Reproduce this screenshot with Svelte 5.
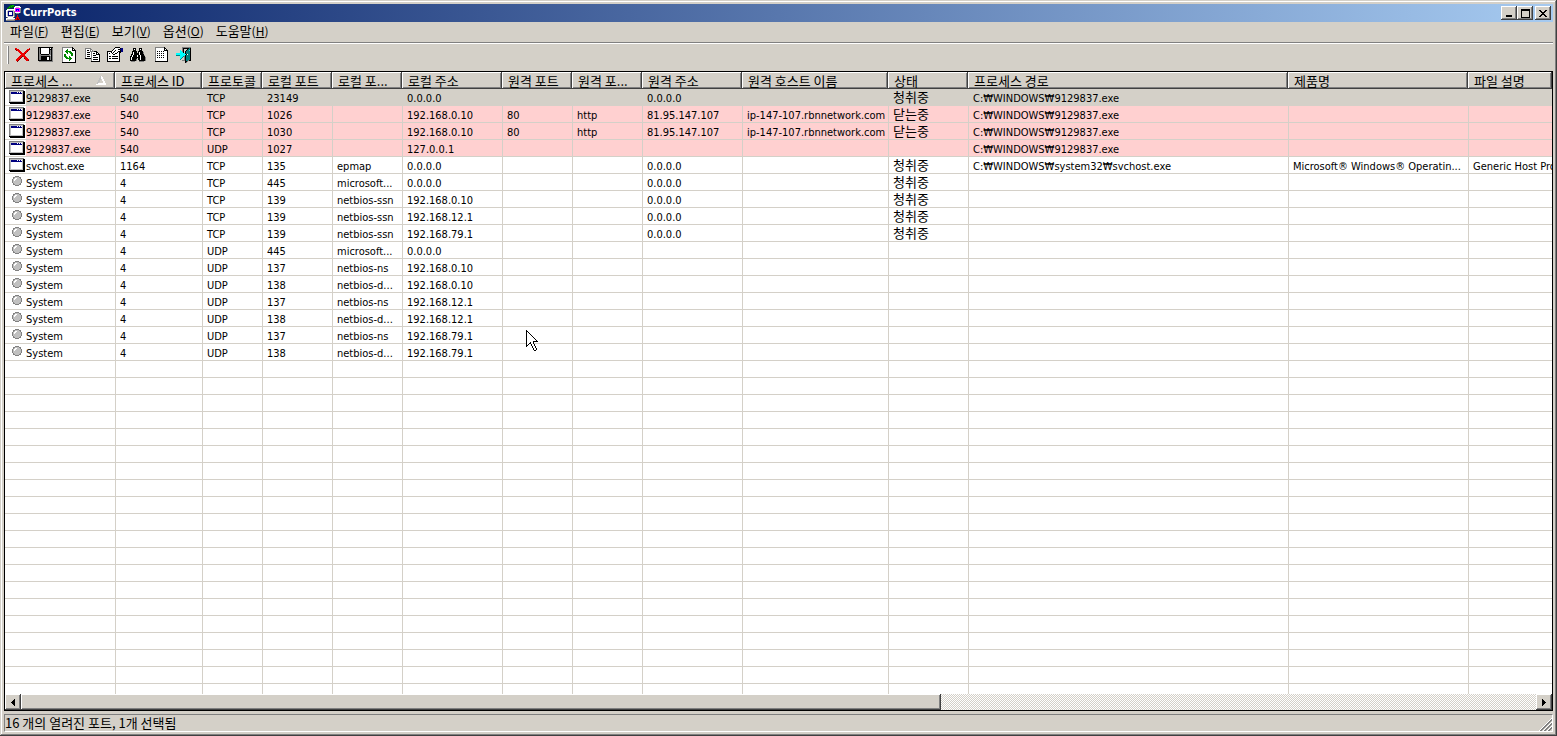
<script>
  const ROW_HEIGHT = 17;

  const menus = [
    ['파일', 'F'],
    ['편집', 'E'],
    ['보기', 'V'],
    ['옵션', 'O'],
    ['도움말', 'H'],
  ];

  const columns = [
    { text: '프로세스 ...', width: 110, sorted: true },
    { text: '프로세스 ID', width: 87 },
    { text: '프로토콜', width: 60 },
    { text: '로컬 포트', width: 70 },
    { text: '로컬 포...', width: 70 },
    { text: '로컬 주소', width: 100 },
    { text: '원격 포트', width: 70 },
    { text: '원격 포...', width: 70 },
    { text: '원격 주소', width: 100 },
    { text: '원격 호스트 이름', width: 146 },
    { text: '상태', width: 80 },
    { text: '프로세스 경로', width: 320 },
    { text: '제품명', width: 180 },
    { text: '파일 설명' },
  ];

  const exe = 'C:₩WINDOWS₩9129837.exe';
  const svchost = 'C:₩WINDOWS₩system32₩svchost.exe';
  const host = 'ip-147-107.rbnnetwork.com';

  const rows = [
    ['9129837.exe', '540', 'TCP', '23149', '', '0.0.0.0', '', '', '0.0.0.0', '', '청취중', exe, '', ''],
    ['9129837.exe', '540', 'TCP', '1026', '', '192.168.0.10', '80', 'http', '81.95.147.107', host, '닫는중', exe, '', ''],
    ['9129837.exe', '540', 'TCP', '1030', '', '192.168.0.10', '80', 'http', '81.95.147.107', host, '닫는중', exe, '', ''],
    ['9129837.exe', '540', 'UDP', '1027', '', '127.0.0.1', '', '', '', '', '', exe, '', ''],
    ['svchost.exe', '1164', 'TCP', '135', 'epmap', '0.0.0.0', '', '', '0.0.0.0', '', '청취중', svchost, 'Microsoft® Windows® Operatin...', 'Generic Host Process'],
    system('TCP', '445', 'microsoft...', '0.0.0.0', true),
    system('TCP', '139', 'netbios-ssn', '192.168.0.10', true),
    system('TCP', '139', 'netbios-ssn', '192.168.12.1', true),
    system('TCP', '139', 'netbios-ssn', '192.168.79.1', true),
    system('UDP', '445', 'microsoft...', '0.0.0.0'),
    system('UDP', '137', 'netbios-ns', '192.168.0.10'),
    system('UDP', '138', 'netbios-d...', '192.168.0.10'),
    system('UDP', '137', 'netbios-ns', '192.168.12.1'),
    system('UDP', '138', 'netbios-d...', '192.168.12.1'),
    system('UDP', '137', 'netbios-ns', '192.168.79.1'),
    system('UDP', '138', 'netbios-d...', '192.168.79.1'),
  ];

  function system(protocol, port, service, address, listening) {
    return [
      'System', '4', protocol, port, service, address, '', '',
      listening ? '0.0.0.0' : '', '', listening ? '청취중' : '', '', '', '',
    ];
  }

  // one letter per pixel
  const palette = {
    k: '#000000',
    w: '#ffffff',
    g: '#808080',
    s: '#c0c0c0',
    r: '#ee0000',
    d: '#800000',
    n: '#000080',
    b: '#0000ff',
    e: '#008000',
    l: '#00c000',
    c: '#00ffff',
    t: '#008080',
    y: '#ffffcc',
    m: '#ff00ff',
  };

  const art = {
    app: [
      '....eell........',
      '...eeleeewwwww..',
      '..eleee.wwsssww.',
      '.ee.....wmmmmmg.',
      '.wwwwwwwwmbbbmg.',
      'wwsssssswmbmbmg.',
      'wsnnnnnsgmmmmmg.',
      'wsnwwwnsgwwwwwg.',
      'wsnwwwnsg.ggg...',
      'wsnwwwnsg.......',
      'wsnnnnnsg..r....',
      'wwssssswg..r....',
      '.gwwwwwg..rrr...',
      'wwwwwwwww.rdr...',
      'wsssssssgrrddr..',
      'ggggggggg.......',
    ],
    remove: [
      '................',
      'rr............r.',
      'drrr........rrd.',
      '.drrr......rrr..',
      '...rrr....rrd...',
      '....rrr..rrr....',
      '.....rrrrrd.....',
      '......rrrr......',
      '.....rrrrr......',
      '....rrrdrrr.....',
      '...rrrd..rrr....',
      '..rrrd...drrr...',
      '.rrrd.....rrrr..',
      '.rrd.......rrd..',
      '..d.............',
      '................',
    ],
    save: [
      'kkkkkkkkkkkkkkk.',
      'kgkwwwwwwwwkwkg.',
      'kgkwwwwwwwwkkkg.',
      'kgkwwwwwwwwkgkg.',
      'kgkwwwwwwwwkgkg.',
      'kgkwwwwwwwwkgkg.',
      'kgkwwwwwwwwkgkg.',
      'kggkkkkkkkkggkg.',
      'kgggggggggggskg.',
      'kggkkkkkkkkkgkg.',
      'kggkkkkkkwwkgkg.',
      'kggkkkkkkwwkgkg.',
      'kggkkkkkkwwkgkg.',
      'kkkkkkkkkkkkkkg.',
      '.gggggggggggggg.',
      '................',
    ],
    refresh: [
      '.ggggggggggk....',
      '.gwwwwwwwwwkk...',
      '.gwwwwewwwwkwk..',
      '.gwwweewwwwkkkk.',
      '.gwweeleeewwwwk.',
      '.gwwweewleewwwk.',
      '.gwwwwewwleewwk.',
      '.gweewwwwweewwk.',
      '.gweewwwwweewwk.',
      '.gweelwwewwwwwk.',
      '.gwweelweewwwwk.',
      '.gwwweeeleewwwk.',
      '.gwwwwwweewwwwk.',
      '.gwwwwwwewwwwwk.',
      '.gwwwwwwwwwwwwk.',
      '.kkkkkkkkkkkkkk.',
    ],
    copy: [
      '................',
      '.gggggg.........',
      '.gwwwwgg........',
      '.gwkkwgwg.......',
      '.gwwwwggggkkk...',
      '.gwkkkwgwwwwkk..',
      '.gwwwwwgwkkwkwk.',
      '.gwkkkwgwwwwkkkk',
      '.gwwwwwgwkkkwwwk',
      '.gwkkkwgwwwwwwwk',
      '.gwwwwwgwkkkkkwk',
      '.kkkkkkgwwwwwwwk',
      '.......gwkkkkkwk',
      '.......gwwwwwwwk',
      '.......kkkkkkkkk',
      '................',
    ],
    properties: [
      '........kkkkk...',
      '.......kwwwwwknn',
      '......kwwwwkknnn',
      '.....kwwkwwwwknn',
      'kkkkkwwkwwwkkknn',
      'kwwwkwkwwwkwkk..',
      'kwkwwkwwkkwwk...',
      'kwwwwwkkwwwwk...',
      'kwwwwwwwwwwwk...',
      'kwkkwkkkkkkwk...',
      'kwwwwwwwwwwwk...',
      'kwkkwkkkkkkwk...',
      'kwwwwwwwwwwwk...',
      'kwwwwwwwwwwwk...',
      'kkkkkkkkkkkkk...',
      '................',
    ],
    find: [
      '................',
      '...kkk...kkk....',
      '...kwk...kwk....',
      '...kkk...kkk....',
      '..kkkkk.kkkkk...',
      '..kwkkk.kwkkkg..',
      '..kwkkkkkwkkkg..',
      '.kkwkkkkkwkkkk..',
      '.kwkkkkwkkwkkkg.',
      'kkwkkkkwkkwkkkk.',
      'kwkkkkkkkkwkkkkg',
      'kwkkkkk.kkwkkkkg',
      'kwkkkkg.kkwkkkkg',
      'kkkkkkg..kkkkkkg',
      '.gggg....ggggg..',
      '................',
    ],
    report: [
      '..gggggggggk....',
      '..gwwwwwwwwkk...',
      '..gwwwwwwwwkwk..',
      '..gwwwwwwwwkkkk.',
      '..gwkwkwkwkwwwk.',
      '..gwwwwwwwwwwwk.',
      '..gwkwkwkwkwwwk.',
      '..gwwwwwwwwwwwk.',
      '..gwkwkwkwkwwwk.',
      '..gwwwwwwwwwwwk.',
      '..gwkwkwkwkwwwk.',
      '..gwwwwwwwwwwwk.',
      '..gwwwwwwwwwwwk.',
      '..gwwwwwwwwwwwk.',
      '..kkkkkkkkkkkkk.',
      '................',
    ],
    exit: [
      '......ggggggggg.',
      '......gkkkkkktk.',
      '......gk...kttk.',
      '....c.gk..kttck.',
      '....ccgk.kttttk.',
      '....ccck.kttttk.',
      'ccccccccckttttk.',
      'cccccccccckwttk.',
      'ttttccccckttttk.',
      '....ccctgkttttk.',
      '....cct.gkttttk.',
      '....ct..gkttttk.',
      '....t...gkttttk.',
      '......gggkttgkk.',
      '.........kkg....',
      '.........kg.....',
    ],
    program: [
      'ggggggggggggggg.',
      'gssssssssssssskk',
      'gsnnnnnnwnwnwskk',
      'gsnnnnnnnnnnnskk',
      'gswwwwwwwwwwwskk',
      'gswwwwwwwwwwwskk',
      'gswwwwwwwwwwwskk',
      'gswwwwwwwwwwwskk',
      'gswwwwwwwwwwwskk',
      'gswwwwwwwwwwwskk',
      'gswwwwwwwwwwwskk',
      'gssssssssssssskk',
      'kkkkkkkkkkkkkkkk',
      '.kkkkkkkkkkkkkkk',
    ],
    service: [
      '................',
      '......gggg......',
      '....ggssssgg....',
      '....gswwsssg....',
      '...gswwsssssg...',
      '...gswssssssg...',
      '...gssssssssg...',
      '...gssssssssg...',
      '....gssssssg....',
      '....ggssssgg....',
      '......gggg......',
      '................',
      '................',
      '................',
    ],
    cursor: [
      'k...........',
      'kk..........',
      'kwk.........',
      'kwwk........',
      'kwwwk.......',
      'kwwwwk......',
      'kwwwwwk.....',
      'kwwwwwwk....',
      'kwwwwwwwk...',
      'kwwwwwwwwk..',
      'kwwwwwwwwwk.',
      'kwwwwwwkkkkk',
      'kwwwkwwk....',
      'kwwkkwwk....',
      'kwk..kwwk...',
      'kk...kwwk...',
      'k.....kwwk..',
      '......kwwk..',
      '.......kwwk.',
      '.......kwwk.',
      '........kk..',
    ],
    minimize: ['........', '........', '........', '........', '........', '........', '.kkkkkk.', '.kkkkkk.'],
    maximize: ['kkkkkkkkk', 'kkkkkkkkk', 'k.......k', 'k.......k', 'k.......k', 'k.......k', 'k.......k', 'k.......k', 'kkkkkkkkk'],
    close: ['kk....kk', '.kk..kk.', '..kkkk..', '...kk...', '..kkkk..', '.kk..kk.', 'kk....kk'],
    left: ['...k', '..kk', '.kkk', 'kkkk', '.kkk', '..kk', '...k'],
    right: ['k...', 'kk..', 'kkk.', 'kkkk', 'kkk.', 'kk..', 'k...'],
    sort: [
      '....sw....',
      '....sww...',
      '...ssww...',
      '...ss.ww..',
      '..ss..ww..',
      '..ss...ww.',
      '.ss....ww.',
      '.swwwwwwww',
      'wwwwwwwwww',
    ],
  };

  const tools = [
    ['remove', '연결 닫기'],
    ['save', '저장'],
    ['refresh', '새로 고침'],
    ['copy', '복사'],
    ['properties', '속성'],
    ['find', '찾기'],
    ['report', '보고서'],
    ['exit', '끝내기'],
  ];

  const toPaths = lines => {
    const paths = {};
    lines.forEach((line, y) => {
      [...line].forEach((key, x) => {
        if (key === '.') return;
        paths[key] = (paths[key] || '') + `M${x} ${y}h1v1h-1z`;
      });
    });
    return Object.entries(paths);
  };

  let selected = $state(0);
  let gridHeight = $state(0);

  let blankCount = $derived(
    Math.max(0, Math.ceil(gridHeight / ROW_HEIGHT) - rows.length - 1)
  );

  const isHangul = text => /[가-힣]/.test(text);
</script>

{#snippet icon(name)}
  <svg
    width={art[name][0].length}
    height={art[name].length}
    viewBox="0 0 {art[name][0].length} {art[name].length}"
    shape-rendering="crispEdges"
    aria-hidden="true"
  >
    {#each toPaths(art[name]) as [key, d]}
      <path {d} fill={palette[key]} />
    {/each}
  </svg>
{/snippet}

<main>
  <header class="title">
    {@render icon('app')}
    <h1>CurrPorts</h1>
    <div class="window-buttons">
      <button class="raised" aria-label="최소화">{@render icon('minimize')}</button>
      <button class="raised" aria-label="최대화">{@render icon('maximize')}</button>
      <button class="raised close" aria-label="닫기">{@render icon('close')}</button>
    </div>
  </header>

  <nav>
    {#each menus as [text, key]}
      <button>{text}<span>(<u>{key}</u>)</span></button>
    {/each}
  </nav>

  <div class="toolbar">
    <div class="grip"></div>
    {#each tools as [name, label]}
      <button aria-label={label}>{@render icon(name)}</button>
    {/each}
  </div>

  <div class="list">
    <div class="grid" bind:clientHeight={gridHeight}>
      <table>
        <colgroup>
          {#each columns as column}
            <col style:width={column.width ? `${column.width}px` : null} />
          {/each}
        </colgroup>
        <thead>
          <tr>
            {#each columns as column}
              <th>
                <button>
                  {column.text}
                  {#if column.sorted}{@render icon('sort')}{/if}
                </button>
              </th>
            {/each}
          </tr>
        </thead>
        <tbody>
          {#each rows as row, i}
            <tr
              class:alert={i > 0 && i < 4}
              class:selected={i === selected}
              onclick={() => (selected = i)}
            >
              {#each row as cell, j}
                {#if j === 0}
                  <td class="process">
                    <div>
                      <span>{@render icon(cell === 'System' ? 'service' : 'program')}</span>
                      <b>{cell}</b>
                    </div>
                  </td>
                {:else}
                  <td class:hangul={isHangul(cell)}>{cell}</td>
                {/if}
              {/each}
            </tr>
          {/each}
          {#each { length: blankCount } as _}
            <tr>
              {#each columns as _}<td></td>{/each}
            </tr>
          {/each}
        </tbody>
      </table>
      <div class="pointer">{@render icon('cursor')}</div>
    </div>
    <div class="scrollbar">
      <button class="raised" aria-label="왼쪽">{@render icon('left')}</button>
      <div class="track"><div class="thumb raised"></div></div>
      <button class="raised" aria-label="오른쪽">{@render icon('right')}</button>
    </div>
  </div>

  <footer>
    <span>16 개의 열려진 포트, 1개 선택됨</span>
    <svg width="13" height="13" viewBox="0 0 13 13" aria-hidden="true">
      <path d="M0 13L13 0M4 13L13 4M8 13L13 8" stroke="#fff" />
      <path d="M1 13L13 1M2 13L13 2M5 13L13 5M6 13L13 6M9 13L13 9M10 13L13 10" stroke="#808080" />
    </svg>
  </footer>
</main>

<style>
  :global(body) {
    margin: 0;
  }

  main {
    box-sizing: border-box;
    height: 100vh;
    padding: 4px;
    display: flex;
    flex-direction: column;
    overflow: hidden;
    background: #d4d0c8;
    box-shadow:
      inset -1px -1px #404040,
      inset 1px 1px #d4d0c8,
      inset -2px -2px #808080,
      inset 2px 2px #fff;
    color: #000;
    font-family: 'DejaVu Sans Condensed', 'Noto Sans CJK KR', sans-serif;
    font-size: 11px;
    cursor: default;
  }

  svg {
    display: block;
    flex: none;
  }

  button {
    display: flex;
    align-items: center;
    margin: 0;
    padding: 0;
    border: none;
    border-radius: 0;
    background: #d4d0c8;
    color: #000;
    font: inherit;
  }

  .raised {
    box-sizing: border-box;
    justify-content: center;
    background: #d4d0c8;
    box-shadow:
      inset -1px -1px #404040,
      inset 1px 1px #fff,
      inset -2px -2px #808080;
  }

  .title {
    flex: none;
    display: flex;
    align-items: center;
    height: 18px;
    padding: 0 2px;
    background: linear-gradient(to right, #0a246a, #a6caf0);
  }

  h1 {
    flex: 1;
    margin: 0 0 0 1px;
    color: #fff;
    font-size: 11px;
    line-height: 18px;
  }

  .window-buttons {
    display: flex;
  }

  .window-buttons button {
    width: 16px;
    height: 14px;
  }

  .window-buttons .close {
    margin-left: 2px;
  }

  nav {
    flex: none;
    display: flex;
    height: 18px;
    padding-bottom: 2px;
  }

  nav button {
    padding: 0 6px;
    font-family: 'Noto Sans CJK KR', sans-serif;
    font-size: 13px;
    line-height: 18px;
  }

  nav span {
    font-size: 12px;
  }

  .toolbar {
    flex: none;
    display: flex;
    align-items: center;
    height: 24px;
    padding-bottom: 4px;
    border-top: 1px solid #808080;
    box-shadow: inset 0 1px #fff;
  }

  .toolbar button {
    justify-content: center;
    width: 23px;
    height: 22px;
  }

  .grip {
    width: 1px;
    height: 18px;
    margin: 0 2px 0 3px;
    border-right: 1px solid #808080;
    background: #fff;
  }

  .list {
    flex: 1;
    min-height: 0;
    display: flex;
    flex-direction: column;
    border: 1px solid #000;
    background: #fff;
  }

  .grid {
    position: relative;
    flex: 1;
    min-height: 0;
    overflow: hidden;
  }

  table {
    width: 100%;
    table-layout: fixed;
    border-collapse: separate;
    border-spacing: 0;
  }

  th {
    height: 17px;
    padding: 0;
    font-weight: normal;
  }

  th button {
    box-sizing: border-box;
    justify-content: space-between;
    width: 100%;
    height: 17px;
    padding: 0 9px 0 6px;
    white-space: nowrap;
    font-family: 'Noto Sans CJK KR', sans-serif;
    font-size: 13px;
    line-height: 16px;
    box-shadow:
      inset -1px -1px #404040,
      inset 1px 1px #fff,
      inset -2px -2px #808080;
  }

  td {
    box-sizing: border-box;
    height: 17px;
    padding: 3px 0 0 4px;
    overflow: hidden;
    border-left: 1px solid #d4d0c8;
    border-bottom: 1px solid #d4d0c8;
    white-space: nowrap;
    line-height: 13px;
  }

  td:first-child {
    padding: 0;
    border-left: none;
  }

  td.hangul {
    padding-top: 0;
    overflow: visible;
    font-family: 'Noto Sans CJK KR', sans-serif;
    font-size: 13px;
    line-height: 16px;
  }

  .process div {
    display: flex;
    height: 16px;
  }

  .process span {
    width: 17px;
    padding: 1px 0 0 4px;
    background: #fff;
  }

  .process b {
    padding-top: 3px;
    font-weight: normal;
  }

  .alert td {
    background: #ffd0d0;
  }

  .selected td {
    background: #d4d0c8;
  }

  .pointer {
    position: absolute;
    left: 521px;
    top: 258px;
    pointer-events: none;
  }

  .scrollbar {
    flex: none;
    display: flex;
    height: 16px;
  }

  .scrollbar button {
    width: 16px;
  }

  .track {
    flex: 1;
    display: flex;
    background: repeating-conic-gradient(#fff 0 25%, #d4d0c8 0 50%) 0 0 / 2px 2px;
  }

  .thumb {
    width: 60.7%;
  }

  footer {
    flex: none;
    display: flex;
    align-items: flex-end;
    justify-content: space-between;
    box-sizing: border-box;
    height: 18px;
    margin-top: 3px;
    border: 1px solid;
    border-color: #808080 #fff #fff #808080;
    font-family: 'Noto Sans CJK KR', sans-serif;
    font-size: 13px;
    line-height: 16px;
  }
</style>
